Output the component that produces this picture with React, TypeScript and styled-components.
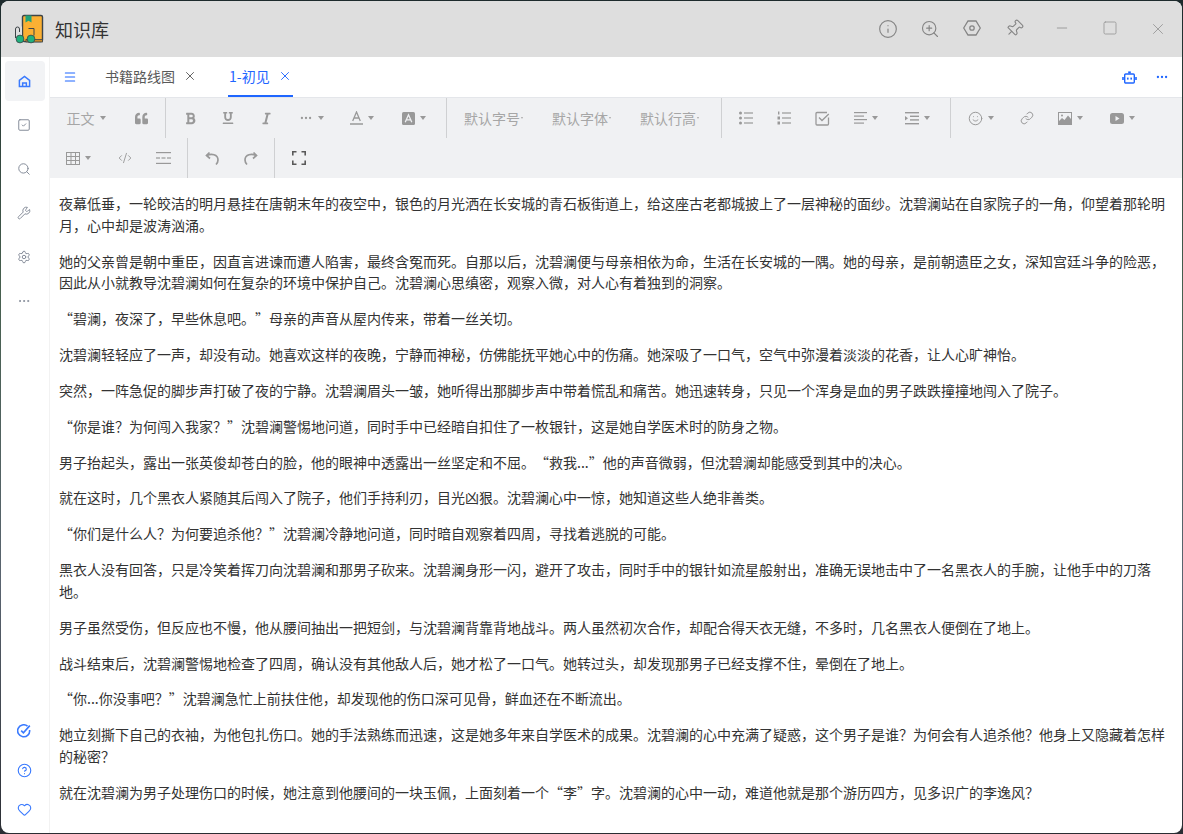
import React from 'react'
import styled, { createGlobalStyle } from 'styled-components'
import {
  CircleHelp,
  CodeXml,
  Ellipsis,
  Heart,
  Info,
  Link,
  Menu,
  Minus,
  Pin,
  Search,
  Settings,
  Smile,
  Square,
  SquareCheck,
  Wrench,
  X,
  ZoomIn,
} from 'lucide-react'
import { FaBold, FaItalic, FaQuoteLeft, FaUnderline } from 'react-icons/fa'

const GlobalStyle = createGlobalStyle`
  html, body {
    margin: 0;
    padding: 0;
    height: 100%;
    overflow: hidden;
  }
  body {
    font-family: "Noto Sans CJK SC", "Noto Sans", sans-serif;
    text-spacing-trim: space-all;
    background: linear-gradient(180deg, #1d2a2c 0%, #47604f 35%, #5a6470 70%, #2a2d33 100%);
  }
`

const Window = styled.div`
  width: 1181px;
  height: 832px;
  margin: 1px 0 0 1px;
  border-radius: 8px;
  overflow: hidden;
  display: flex;
  flex-direction: column;
  background: #fff;
`

const TitleBar = styled.header`
  height: 56px;
  flex: none;
  display: flex;
  align-items: center;
  background: #dedede;
  padding-left: 13px;
`

const Title = styled.div`
  margin-left: 11px;
  font-size: 18px;
  color: #333;
  flex: 1;
`

const TitleIcon = styled.div`
  width: 42px;
  display: flex;
  justify-content: center;
  color: #858585;
`

const WinIcon = styled.div`
  width: 48px;
  display: flex;
  justify-content: center;
  color: #999;
`

const TitleIcons = styled.div`
  display: flex;
  margin-right: 3px;
`

const WinIcons = styled.div`
  display: flex;
`

const Main = styled.div`
  flex: 1;
  display: flex;
  min-height: 0;
`

const Sidebar = styled.nav`
  width: 48px;
  flex: none;
  display: flex;
  flex-direction: column;
  justify-content: space-between;
  align-items: center;
  padding: 4px 0 12px;
  border-right: 1px solid #f2f2f2;
`

const SideGroup = styled.div`
  display: flex;
  flex-direction: column;
  gap: 4px;
`

const SideButton = styled.div<{ $active?: boolean }>`
  width: 40px;
  height: 40px;
  border-radius: 4px;
  display: flex;
  align-items: center;
  justify-content: center;
  background: ${p => (p.$active ? '#f2f3f5' : 'transparent')};
  color: #858c99;

  svg {
    margin-right: 2px;
  }
`

const SideFoot = styled.div`
  display: flex;
  flex-direction: column;
  gap: 15px;
  color: #3a7afe;
`

const FootButton = styled.div`
  width: 40px;
  height: 24px;
  display: flex;
  align-items: center;
  justify-content: center;

  svg {
    margin-right: 2px;
  }
`

const Content = styled.div`
  flex: 1;
  min-width: 0;
  display: flex;
  flex-direction: column;
`

const TabBar = styled.div`
  height: 40px;
  flex: none;
  display: flex;
  align-items: stretch;
  padding-left: 13px;
  border-bottom: 1px solid #e4e6ea;
  color: #1f66ff;
`

const MenuBox = styled.div`
  display: flex;
  align-items: center;
  width: 30px;
`

const Tab = styled.div<{ $active?: boolean }>`
  display: flex;
  align-items: center;
  gap: 8px;
  height: 40px;
  margin: 0 0 0 ${p => (p.$active ? '31px' : '12px')};
  padding: 0 ${p => (p.$active ? '1px' : '0')};
  font-size: 14px;
  color: ${p => (p.$active ? '#1f66ff' : '#595959')};
  border-bottom: 2px solid ${p => (p.$active ? '#1f66ff' : 'transparent')};
  box-sizing: border-box;
`

const TabRight = styled.div`
  margin-left: auto;
  display: flex;
  align-items: center;
  gap: 18px;
  padding-right: 13px;
`

const Toolbar = styled.div`
  flex: none;
  background: #f0f1f3;
  display: flex;
  flex-direction: column;
  height: 80px;
  color: #999;
`

const ToolRow = styled.div`
  height: 40px;
  display: flex;
  align-items: center;
`

const Tool = styled.div<{ $w: number; $dark?: boolean }>`
  width: ${p => p.$w}px;
  height: 40px;
  flex: none;
  display: flex;
  align-items: center;
  justify-content: center;
  gap: 5px;
  font-size: 14px;
  color: ${p => (p.$dark ? '#595959' : '#a6a6a6')};
`

const ToolDivider = styled.div`
  width: 1px;
  height: 40px;
  margin: 0 5px;
  flex: none;
  background: #cfd0d2;
`

const Caret = styled.span<{ $small?: boolean }>`
  width: 0;
  height: 0;
  flex: none;
  border-left: ${p => (p.$small ? 1 : 3)}px solid transparent;
  border-right: ${p => (p.$small ? 1 : 3)}px solid transparent;
  border-top: ${p => (p.$small ? 2 : 4)}px solid ${p => (p.$small ? '#a6a6a6' : '#999')};
`

const SelectTool = styled(Tool)`
  gap: 1px;
  justify-content: flex-start;
  padding-left: 12px;
  box-sizing: border-box;
`

const Article = styled.article`
  flex: 1;
  overflow: hidden;
  padding: 15px 10px 0 9px;
`

const Paragraph = styled.p`
  margin: 0 0 14px;
  font-size: 14px;
  line-height: 1.56;
  color: #333;
`

const paragraphs = [
  '夜幕低垂，一轮皎洁的明月悬挂在唐朝末年的夜空中，银色的月光洒在长安城的青石板街道上，给这座古老都城披上了一层神秘的面纱。沈碧澜站在自家院子的一角，仰望着那轮明月，心中却是波涛汹涌。',
  '她的父亲曾是朝中重臣，因直言进谏而遭人陷害，最终含冤而死。自那以后，沈碧澜便与母亲相依为命，生活在长安城的一隅。她的母亲，是前朝遗臣之女，深知宫廷斗争的险恶，因此从小就教导沈碧澜如何在复杂的环境中保护自己。沈碧澜心思缜密，观察入微，对人心有着独到的洞察。',
  '“碧澜，夜深了，早些休息吧。”母亲的声音从屋内传来，带着一丝关切。',
  '沈碧澜轻轻应了一声，却没有动。她喜欢这样的夜晚，宁静而神秘，仿佛能抚平她心中的伤痛。她深吸了一口气，空气中弥漫着淡淡的花香，让人心旷神怡。',
  '突然，一阵急促的脚步声打破了夜的宁静。沈碧澜眉头一皱，她听得出那脚步声中带着慌乱和痛苦。她迅速转身，只见一个浑身是血的男子跌跌撞撞地闯入了院子。',
  '“你是谁？为何闯入我家？”沈碧澜警惕地问道，同时手中已经暗自扣住了一枚银针，这是她自学医术时的防身之物。',
  '男子抬起头，露出一张英俊却苍白的脸，他的眼神中透露出一丝坚定和不屈。“救我...”他的声音微弱，但沈碧澜却能感受到其中的决心。',
  '就在这时，几个黑衣人紧随其后闯入了院子，他们手持利刃，目光凶狠。沈碧澜心中一惊，她知道这些人绝非善类。',
  '“你们是什么人？为何要追杀他？”沈碧澜冷静地问道，同时暗自观察着四周，寻找着逃脱的可能。',
  '黑衣人没有回答，只是冷笑着挥刀向沈碧澜和那男子砍来。沈碧澜身形一闪，避开了攻击，同时手中的银针如流星般射出，准确无误地击中了一名黑衣人的手腕，让他手中的刀落地。',
  '男子虽然受伤，但反应也不慢，他从腰间抽出一把短剑，与沈碧澜背靠背地战斗。两人虽然初次合作，却配合得天衣无缝，不多时，几名黑衣人便倒在了地上。',
  '战斗结束后，沈碧澜警惕地检查了四周，确认没有其他敌人后，她才松了一口气。她转过头，却发现那男子已经支撑不住，晕倒在了地上。',
  '“你...你没事吧？”沈碧澜急忙上前扶住他，却发现他的伤口深可见骨，鲜血还在不断流出。',
  '她立刻撕下自己的衣袖，为他包扎伤口。她的手法熟练而迅速，这是她多年来自学医术的成果。沈碧澜的心中充满了疑惑，这个男子是谁？为何会有人追杀他？他身上又隐藏着怎样的秘密？',
  '就在沈碧澜为男子处理伤口的时候，她注意到他腰间的一块玉佩，上面刻着一个“李”字。沈碧澜的心中一动，难道他就是那个游历四方，见多识广的李逸风？',
]

const Logo = () => (
  <svg width="30" height="30" viewBox="0 0 30 30">
    <rect x="8.5" y="1.5" width="20" height="26" rx="1.5" fill="#fbb033" stroke="#3d4448" strokeWidth="1.4" />
    <path d="M11.5 1.5h6v7l-3-1.800-3 1.800z" fill="#1fa27a" />
    <path d="M14.500 14.500h5.500v7" fill="none" stroke="#3d4448" strokeWidth="1" />
    <path d="M1.500 12.500h6.500v12h-6.500z" fill="#dedede" />
    <path d="M1.500 24v-9a2 2 0 0 1 4 0v3" fill="none" stroke="#3d4448" strokeWidth="1" />
    <rect x="12" y="25.500" width="16.500" height="2.500" fill="#c98a2b" stroke="#3d4448" strokeWidth="0.8" />
    <circle cx="6" cy="25" r="3.900" fill="#1fb27e" stroke="#3d4448" strokeWidth="0.8" />
    <circle cx="17" cy="25" r="3.900" fill="#1fb27e" stroke="#3d4448" strokeWidth="0.8" />
  </svg>
)

const HomeIcon = () => (
  <svg width="13" height="13" viewBox="0 0 14 14" fill="none" stroke="#3a7afe" strokeWidth="1.6">
    <path d="M1.500 5.800L7 1.500l5.500 4.300v6.700h-11z" />
    <path d="M5 12.500V8.500h4v4" />
  </svg>
)

const HexIcon = () => (
  <svg width="18" height="18" viewBox="0 0 18 18" fill="none" stroke="currentColor" strokeWidth="1.300">
    <path d="M5 2h8l4.300 7L13 16H5L.7 9z" />
    <circle cx="9" cy="9" r="2.200" />
  </svg>
)

const RobotIcon = () => (
  <svg width="15" height="13" viewBox="0 0 15 13" fill="none">
    <rect x="2.700" y="3" width="9.600" height="9" rx="1" stroke="#1f66ff" strokeWidth="1.400" />
    <rect x="6.200" y="0.400" width="2.600" height="2" fill="#1f66ff" />
    <rect x="0.200" y="6" width="1.600" height="3" fill="#1f66ff" />
    <rect x="13.200" y="6" width="1.600" height="3" fill="#1f66ff" />
    <rect x="5" y="6.600" width="1.600" height="2" fill="#1f66ff" />
    <rect x="8.400" y="6.600" width="1.600" height="2" fill="#1f66ff" />
  </svg>
)

const BadgeIcon = () => (
  <svg width="14" height="14" viewBox="0 0 14 14" fill="none" stroke="currentColor" strokeWidth="1.600">
    <path d="M10.500 2.200A6 6 0 1 0 12.600 6" />
    <path d="M4.200 6.600l2.200 2.200L12.800 1.600" />
  </svg>
)

const ListIcon = () => (
  <svg width="14" height="14" viewBox="0 0 14 14" fill="#999">
    <circle cx="1.500" cy="2" r="1.500" />
    <circle cx="1.500" cy="7" r="1.500" />
    <circle cx="1.500" cy="12" r="1.500" />
    <rect x="5" y="1.400" width="9" height="1.200" />
    <rect x="5" y="6.400" width="9" height="1.200" />
    <rect x="5" y="11.400" width="9" height="1.200" />
  </svg>
)

const OrderedIcon = () => (
  <svg width="14" height="14" viewBox="0 0 14 14" fill="#999">
    <rect x="1" y="0.500" width="1.400" height="3" />
    <rect x="0.500" y="5.500" width="2.500" height="3" />
    <rect x="0.500" y="10.500" width="2.500" height="3" />
    <rect x="5" y="1.400" width="9" height="1.200" />
    <rect x="5" y="6.400" width="9" height="1.200" />
    <rect x="5" y="11.400" width="9" height="1.200" />
  </svg>
)

const CheckBoxIcon = () => (
  <svg width="15" height="15" viewBox="0 0 15 15" fill="none" stroke="#999" strokeWidth="1.300">
    <path d="M13.500 6.500v6.500a1 1 0 0 1-1 1H2a1 1 0 0 1-1-1V2.500a1 1 0 0 1 1-1h10" />
    <path d="M4 6.500l3 3 6.800-6.500" />
  </svg>
)

const AlignIcon = () => (
  <svg width="13" height="12" viewBox="0 0 13 12" fill="#999">
    <rect y="0" width="13" height="1.200" />
    <rect y="3.500" width="10" height="1.200" />
    <rect y="7" width="13" height="1.200" />
    <rect y="10.500" width="10" height="1.200" />
  </svg>
)

const IndentIcon = () => (
  <svg width="14" height="13" viewBox="0 0 14 13" fill="#999">
    <rect width="14" height="1.400" />
    <rect x="5" y="3.600" width="9" height="1.400" />
    <rect x="5" y="7.200" width="9" height="1.400" />
    <rect y="11" width="14" height="1.400" />
    <path d="M0 4l3 2.300L0 8.600z" />
  </svg>
)

const TableIcon = () => (
  <svg width="14" height="13" viewBox="0 0 14 13" fill="none" stroke="#999" strokeWidth="1">
    <rect x="0.500" y="0.500" width="13" height="12" />
    <path d="M0.500 4.500h13M0.500 8.500h13M5 .5v12M9.500 .5v12" />
  </svg>
)

const RuleIcon = () => (
  <svg width="15" height="12" viewBox="0 0 15 12" fill="#999">
    <rect width="15" height="1.200" />
    <rect y="5.400" width="4" height="1.200" />
    <rect x="5.500" y="5.400" width="4" height="1.200" />
    <rect x="11" y="5.400" width="4" height="1.200" />
    <rect y="10.800" width="15" height="1.200" />
  </svg>
)

const BoxAIcon = () => (
  <svg width="13" height="13" viewBox="0 0 13 13">
    <rect width="13" height="13" rx="1.500" fill="#999" />
    <path d="M3.200 10.200L6.500 2.800l3.300 7.400M4.500 7.800h4" fill="none" stroke="#f0f1f3" strokeWidth="1.300" />
  </svg>
)

const FontColorIcon = () => (
  <svg width="13" height="14" viewBox="0 0 13 14" fill="none" stroke="#999" strokeWidth="1.300">
    <path d="M2.700 10L6.500 1l3.800 9M4 7h5" />
    <path d="M0 13h13" />
  </svg>
)

const PictureIcon = () => (
  <svg width="14" height="13" viewBox="0 0 14 13">
    <rect x="0.500" y="0.500" width="13" height="12" fill="none" stroke="#999" />
    <path d="M1 12V9l3-3 2.500 2L10 3.500 13 7v5z" fill="#999" />
    <circle cx="4" cy="3.500" r="1" fill="#999" />
  </svg>
)

const VideoIcon = () => (
  <svg width="14" height="11" viewBox="0 0 14 11">
    <rect width="14" height="11" rx="2.500" fill="#999" />
    <path d="M5.500 3l4 2.500-4 2.500z" fill="#f0f1f3" />
  </svg>
)

const HistoryIcon = styled.svg<{ $flip?: boolean }>`
  width: 15px;
  height: 15px;
  fill: none;
  stroke: #999;
  stroke-width: 1.700;
  transform: ${p => (p.$flip ? 'scaleX(-1)' : 'none')};
`

const FullscreenIcon = () => (
  <svg width="14" height="14" viewBox="0 0 14 14" fill="none" stroke="#595959" strokeWidth="1.600">
    <path d="M.8 4.500V.8h3.700M9.500 .8h3.700v3.700M13.200 9.500v3.700H9.500M4.500 13.200H.8V9.500" />
  </svg>
)

const titleIcons = [
  <Info key="info" size={20} strokeWidth={1.400} />,
  <ZoomIn key="zoom" size={20} strokeWidth={1.400} />,
  <HexIcon key="hex" />,
  <Pin key="pin" size={19} strokeWidth={1.400} style={{ transform: 'rotate(45deg)' }} />,
]

const App: React.FC = () => (
  <>
    <GlobalStyle />
    <Window>
      <TitleBar>
        <Logo />
        <Title>知识库</Title>
        <TitleIcons>
          {titleIcons.map((icon, i) => (
            <TitleIcon key={i}>{icon}</TitleIcon>
          ))}
        </TitleIcons>
        <WinIcons>
          <WinIcon>
            <Minus size={16} strokeWidth={1.400} />
          </WinIcon>
          <WinIcon>
            <Square size={16} strokeWidth={1.300} />
          </WinIcon>
          <WinIcon>
            <X size={18} strokeWidth={1.200} />
          </WinIcon>
        </WinIcons>
      </TitleBar>
      <Main>
        <Sidebar>
          <SideGroup>
            <SideButton $active>
              <HomeIcon />
            </SideButton>
            <SideButton>
              <SquareCheck size={14} strokeWidth={1.700} />
            </SideButton>
            <SideButton>
              <Search size={14} strokeWidth={1.700} />
            </SideButton>
            <SideButton>
              <Wrench size={14} strokeWidth={1.700} />
            </SideButton>
            <SideButton>
              <Settings size={14} strokeWidth={1.700} />
            </SideButton>
            <SideButton>
              <Ellipsis size={14} strokeWidth={1.700} />
            </SideButton>
          </SideGroup>
          <SideFoot>
            <FootButton>
              <BadgeIcon />
            </FootButton>
            <FootButton>
              <CircleHelp size={15} strokeWidth={1.800} />
            </FootButton>
            <FootButton>
              <Heart size={15} strokeWidth={1.800} />
            </FootButton>
          </SideFoot>
        </Sidebar>
        <Content>
          <TabBar>
            <MenuBox>
              <Menu size={14} strokeWidth={1.800} />
            </MenuBox>
            <Tab>
              书籍路线图
              <X size={14} strokeWidth={1.600} color="#595959" />
            </Tab>
            <Tab $active>
              1-初见
              <X size={14} strokeWidth={1.600} color="#1f66ff" />
            </Tab>
            <TabRight>
              <RobotIcon />
              <Ellipsis size={14} strokeWidth={2} />
            </TabRight>
          </TabBar>
          <Toolbar>
            <ToolRow>
              <Tool $w={72}>
                正文
                <Caret />
              </Tool>
              <Tool $w={38}>
                <FaQuoteLeft size={13} color="#999" />
              </Tool>
              <ToolDivider />
              <Tool $w={38}>
                <FaBold size={13} color="#999" />
              </Tool>
              <Tool $w={38}>
                <FaUnderline size={12} color="#999" />
              </Tool>
              <Tool $w={38}>
                <FaItalic size={13} color="#999" />
              </Tool>
              <Tool $w={52}>
                <Ellipsis size={14} color="#999" />
                <Caret />
              </Tool>
              <Tool $w={49}>
                <FontColorIcon />
                <Caret />
              </Tool>
              <Tool $w={55}>
                <BoxAIcon />
                <Caret />
              </Tool>
              <ToolDivider />
              <SelectTool $w={88}>
                默认字号
                <Caret $small />
              </SelectTool>
              <SelectTool $w={88}>
                默认字体
                <Caret $small />
              </SelectTool>
              <SelectTool $w={88}>
                默认行高
                <Caret $small />
              </SelectTool>
              <ToolDivider />
              <Tool $w={38}>
                <ListIcon />
              </Tool>
              <Tool $w={38}>
                <OrderedIcon />
              </Tool>
              <Tool $w={38}>
                <CheckBoxIcon />
              </Tool>
              <Tool $w={49}>
                <AlignIcon />
                <Caret />
              </Tool>
              <Tool $w={55}>
                <IndentIcon />
                <Caret />
              </Tool>
              <ToolDivider />
              <Tool $w={49}>
                <Smile size={15} strokeWidth={1.600} color="#999" />
                <Caret />
              </Tool>
              <Tool $w={44}>
                <Link size={14} strokeWidth={1.700} color="#999" />
              </Tool>
              <Tool $w={42}>
                <PictureIcon />
                <Caret />
              </Tool>
              <Tool $w={62}>
                <VideoIcon />
                <Caret />
              </Tool>
            </ToolRow>
            <ToolRow>
              <Tool $w={56}>
                <TableIcon />
                <Caret />
              </Tool>
              <Tool $w={38}>
                <CodeXml size={14} strokeWidth={1.600} color="#999" />
              </Tool>
              <Tool $w={38}>
                <RuleIcon />
              </Tool>
              <ToolDivider />
              <Tool $w={38}>
                <HistoryIcon viewBox="0 0 15 15">
                  <path d="M4.500 1.500L1.500 4.500 5 7.500" />
                  <path d="M2 4.500C6 2.500 13 3 13 9c0 2-1 3.500-2 4.500" />
                </HistoryIcon>
              </Tool>
              <Tool $w={38}>
                <HistoryIcon viewBox="0 0 15 15" $flip>
                  <path d="M4.500 1.500L1.500 4.500 5 7.500" />
                  <path d="M2 4.500C6 2.500 13 3 13 9c0 2-1 3.500-2 4.500" />
                </HistoryIcon>
              </Tool>
              <ToolDivider />
              <Tool $w={38} $dark>
                <FullscreenIcon />
              </Tool>
            </ToolRow>
          </Toolbar>
          <Article>
            {paragraphs.map((text, i) => (
              <Paragraph key={i}>{text}</Paragraph>
            ))}
          </Article>
        </Content>
      </Main>
    </Window>
  </>
)

export default App
